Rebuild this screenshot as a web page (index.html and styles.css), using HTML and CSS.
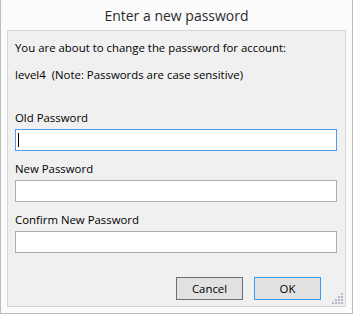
FILE: index.html
```html
<!DOCTYPE html>
<html>
<head>
<meta charset="utf-8">
<link rel="stylesheet" href="styles.css">
</head>
<body>
<div class="window">
  <div class="title">Enter a new password</div>
  <div class="panel">
    <p class="msg msg-first">You are about to change the password for account:</p>
    <p class="msg msg-second">level4&nbsp;&nbsp;(Note: Passwords are case sensitive)</p>
    <div class="field">
      <label class="label">Old Password</label>
      <div class="input focused"><span class="caret"></span></div>
    </div>
    <div class="field">
      <label class="label">New Password</label>
      <div class="input"></div>
    </div>
    <div class="field">
      <label class="label">Confirm New Password</label>
      <div class="input"></div>
    </div>
    <div class="buttons">
      <button class="btn">Cancel</button>
      <button class="btn btn-default">OK</button>
    </div>
    <svg class="grip" width="12" height="12" viewBox="0 0 12 12">
      <g fill="#b4b8c8">
        <rect x="9" y="0" width="2" height="2"/>
        <rect x="6" y="3" width="2" height="2"/>
        <rect x="9" y="3" width="2" height="2"/>
        <rect x="3" y="6" width="2" height="2"/>
        <rect x="6" y="6" width="2" height="2"/>
        <rect x="9" y="6" width="2" height="2"/>
        <rect x="0" y="9" width="2" height="2"/>
        <rect x="3" y="9" width="2" height="2"/>
        <rect x="6" y="9" width="2" height="2"/>
        <rect x="9" y="9" width="2" height="2"/>
      </g>
    </svg>
  </div>
</div>
</body>
</html>
```
FILE: styles.css
```css
html, body {
  margin: 0;
  padding: 0;
  background: #ffffff;
}
.window {
  width: 353px;
  height: 314px;
  box-sizing: border-box;
  border: 1px solid #bdbdbd;
  border-top: none;
  background: #fbfbfb;
  font-family: "Open Sans", "Noto Sans", sans-serif;
  color: #000;
}
.title {
  height: 30px;
  line-height: 31px;
  text-align: center;
  font-size: 14px;
  color: #2b2b2b;
}
.panel {
  position: relative;
  margin: 0 6px;
  height: 277px;
  box-sizing: border-box;
  border: 1px solid #d6d6d6;
  background: #f0f0f0;
  padding: 9px 8px 6px 7px;
  font-size: 11.4px;
}
.msg {
  margin: 0;
  line-height: 16px;
  white-space: nowrap;
}
.msg-second {
  margin-top: 11px;
  margin-bottom: 27px;
}
.field {
  display: flex;
  flex-direction: column;
  gap: 3px;
  margin-bottom: 10px;
}
.label {
  line-height: 16px;
}
.input {
  height: 22px;
  box-sizing: border-box;
  border: 1px solid #abadb3;
  background: #fff;
  position: relative;
}
.input.focused {
  border-color: #569de5;
}
.caret {
  position: absolute;
  left: 2px;
  top: 3px;
  width: 1px;
  height: 14px;
  background: #000;
}
.buttons {
  display: flex;
  justify-content: flex-end;
  gap: 11px;
  margin-top: 24px;
  margin-right: 16px;
}
.btn {
  width: 67px;
  height: 23px;
  box-sizing: border-box;
  border: 1px solid #707070;
  background: #e1e1e1;
  font-family: inherit;
  font-size: 11.4px;
  color: #000;
  padding: 0;
  line-height: 20px;
}
.btn-default {
  border-color: #3c9af0;
}
.grip {
  position: absolute;
  right: 1px;
  bottom: 1px;
}
```
